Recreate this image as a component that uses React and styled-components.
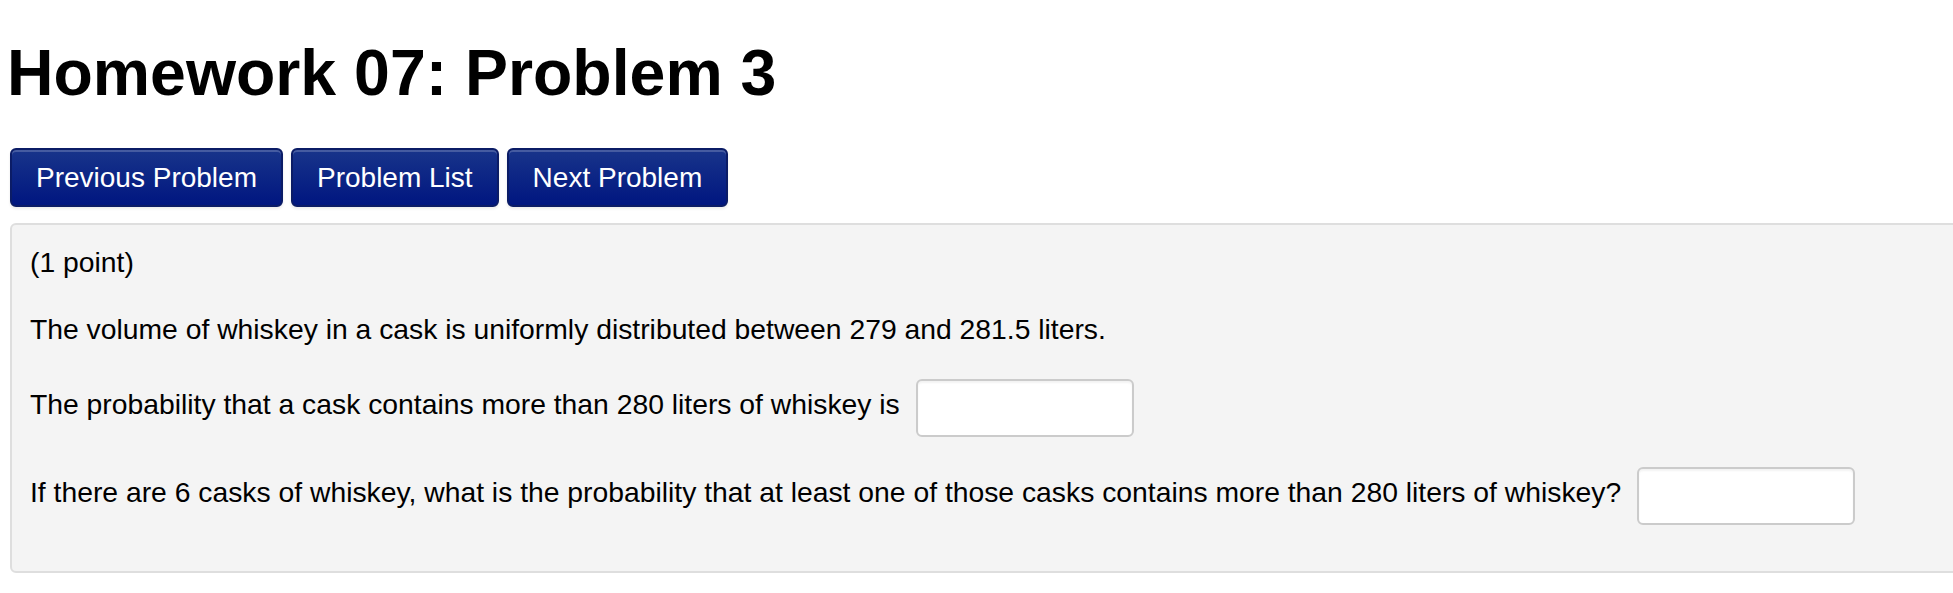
import React from 'react';
import styled, { createGlobalStyle } from 'styled-components';

const GlobalStyle = createGlobalStyle`
    html, body {
        margin: 0;
        padding: 0;
        background: #fff;
        overflow-x: hidden;
    }
    body {
        font-family: "Liberation Sans", Helvetica, Arial, sans-serif;
        color: #000;
    }
`;

const Page = styled.div`
    padding: 0 0 0 10px;
`;

const Title = styled.h1`
    margin: 38px 0 0 -3px;
    font-size: 64.4px;
    line-height: 70px;
    font-weight: 700;
    color: #000;
`;

const Nav = styled.div`
    display: flex;
    gap: 8px;
    margin-top: 40px;
`;

const NavButton = styled.button`
    display: inline-flex;
    align-items: center;
    height: 59px;
    padding: 0 24px;
    border: 2px solid #0b1c66;
    border-radius: 6px;
    background-image: linear-gradient(to bottom, #18348a 0%, #001680 100%);
    box-shadow: inset 0 2px 0 rgba(255, 255, 255, 0.2), 0 2px 3px rgba(0, 0, 0, 0.08);
    color: #fff;
    font-family: inherit;
    font-size: 28px;
    cursor: pointer;
`;

const ProblemPanel = styled.div`
    margin: 16px -40px 0 0;
    padding: 17px 18px 19px;
    border: 2px solid #dedede;
    border-radius: 6px;
    background: #f4f4f4;
`;

const Para = styled.p`
    margin: 0 0 27px;
    font-size: 28.3px;
    line-height: 40px;
    color: #000;
`;

const Answer = styled.input`
    box-sizing: border-box;
    width: 218px;
    height: 58px;
    margin: 3px 0 0 8px;
    padding: 0 12px;
    vertical-align: middle;
    border: 2px solid #cbcbcb;
    border-radius: 6px;
    background: #fff;
    box-shadow: inset 0 2px 2px rgba(0, 0, 0, 0.05);
    font-family: inherit;
    font-size: 28px;
    outline: none;
`;

const App = () => {
    return (
        <Page>
            <GlobalStyle />
            <Title>Homework 07: Problem 3</Title>
            <Nav>
                <NavButton>Previous Problem</NavButton>
                <NavButton>Problem List</NavButton>
                <NavButton>Next Problem</NavButton>
            </Nav>
            <ProblemPanel>
                <Para>(1 point)</Para>
                <Para>The volume of whiskey in a cask is uniformly distributed between 279 and 281.5 liters.</Para>
                <Para>
                    The probability that a cask contains more than 280 liters of whiskey is <Answer type="text" />
                </Para>
                <Para>
                    If there are 6 casks of whiskey, what is the probability that at least one of those casks contains more than 280 liters of whiskey? <Answer type="text" />
                </Para>
            </ProblemPanel>
        </Page>
    )
}

export default App
